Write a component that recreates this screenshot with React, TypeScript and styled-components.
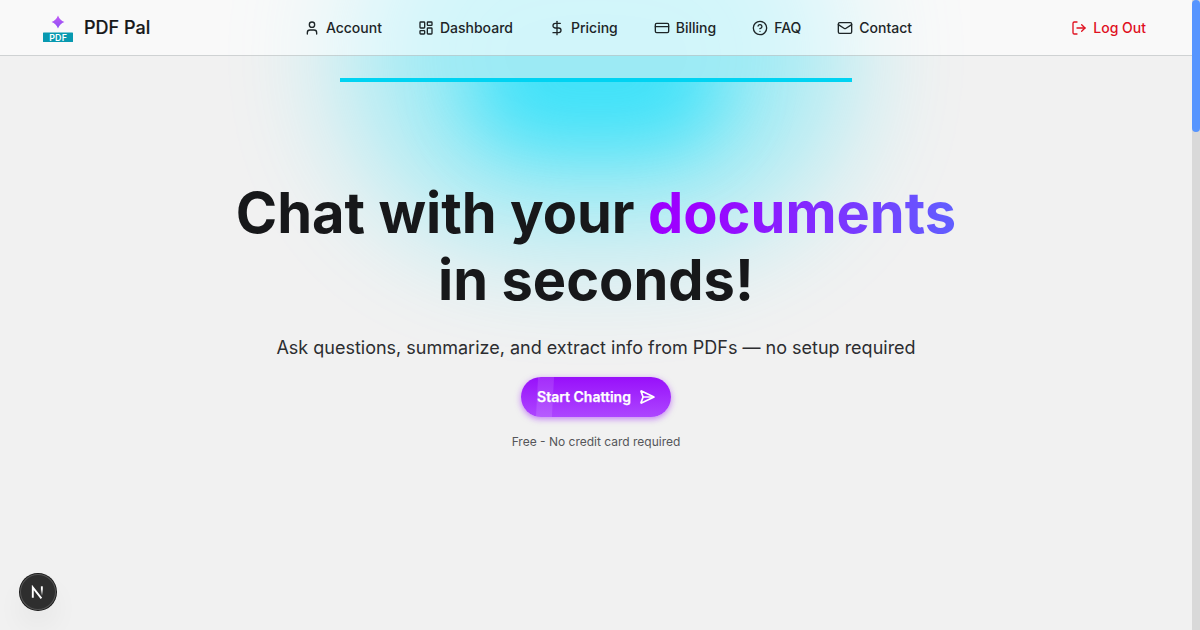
import React from "react";
import styled, { createGlobalStyle } from "styled-components";
import { User, LayoutDashboard, DollarSign, CreditCard, CircleHelp, Mail, LogOut, SendHorizontal } from "lucide-react";

const GlobalStyle = createGlobalStyle`
  * { box-sizing: border-box; }
  body { margin: 0; background: #f1f1f1; font-family: Inter, "Liberation Sans", sans-serif; overflow: hidden; }
`;

const Window = styled.div`
  display: grid;
  grid-template-columns: 1fr 8px;
  height: 630px;
  color: #17181a;
`;

const Page = styled.div`
  position: relative;
  isolation: isolate;
  overflow: hidden;
  display: flex;
  flex-direction: column;
`;

const Track = styled.div`
  background: #d9d9d9;
`;

const Thumb = styled.div`
  height: 132px;
  border-radius: 4px;
  background: #5695ff;
`;

const Lamp = styled.div`
  position: absolute;
  inset: 0;
  z-index: -1;
  overflow: hidden;
`;

const WideGlow = styled.div`
  position: absolute;
  left: 50%;
  top: -130px;
  width: 496px;
  height: 370px;
  margin-left: -248px;
  border-radius: 180px;
  background: #00dffc;
  opacity: 0.35;
  filter: blur(60px);
`;

const Beam = styled.div`
  position: absolute;
  inset: 80px 0 0;
  overflow: hidden;
`;

const InnerGlow = styled.div`
  position: absolute;
  left: 50%;
  top: -72px;
  width: 252px;
  height: 144px;
  margin-left: -126px;
  border-radius: 72px;
  background: #00dcfc;
  opacity: 0.58;
  filter: blur(36px);
`;

const Bar = styled.div`
  position: absolute;
  top: 78px;
  left: 50%;
  width: 512px;
  height: 4px;
  margin-left: -256px;
  background: #00d3f2;
`;

const Header = styled.header`
  display: flex;
  align-items: center;
  justify-content: space-between;
  height: 56px;
  padding: 0 46px 0 42px;
  border-bottom: 1px solid rgba(100, 110, 115, 0.28);
  background: rgba(255, 255, 255, 0.54);
`;

const Brand = styled.div`
  display: flex;
  align-items: center;
  gap: 10px;
  width: 188px;
  font-size: 18px;
  font-weight: 500;
  -webkit-text-stroke: 0.2px currentColor;
`;

const Nav = styled.nav`
  display: flex;
  gap: 36px;
`;

const NavItem = styled.a<{ $danger?: boolean }>`
  display: flex;
  align-items: center;
  gap: 6px;
  font-size: 14px;
  font-weight: 500;
  line-height: 20px;
  color: ${(p) => (p.$danger ? "#e0101f" : "#1d2527")};
`;

const Session = styled.div`
  display: flex;
  justify-content: flex-end;
  width: 160px;
`;

const Hero = styled.main`
  display: flex;
  flex-direction: column;
  align-items: center;
  padding-top: 124px;
  text-align: center;
`;

const Title = styled.h1`
  margin: 0;
  font-size: 56px;
  line-height: 67px;
  font-weight: 700;
`;

const Accent = styled.span`
  background: linear-gradient(90deg, #9d00ff 15%, #615fff 100%);
  background-clip: text;
  -webkit-background-clip: text;
  color: transparent;
`;

const Subtitle = styled.p`
  margin: 20px 0 15px;
  font-size: 18px;
  line-height: 28px;
  color: #2c2d30;
`;

const Cta = styled.button`
  position: relative;
  overflow: hidden;
  display: flex;
  align-items: center;
  gap: 8px;
  height: 40px;
  padding: 0 16px;
  border: 0;
  border-radius: 20px;
  background: linear-gradient(#9810fa, #ad46ff);
  color: #fff;
  font: 600 14px/20px Inter, sans-serif;
  -webkit-text-stroke: 0.25px #fff;
`;

const CtaShadow = styled.div`
  border-radius: 20px;
  box-shadow: 0 2px 6px rgba(152, 16, 250, 0.5);
`;

const Shine = styled.span`
  position: absolute;
  top: 0;
  left: 16px;
  width: 16px;
  height: 40px;
  background: rgba(255, 255, 255, 0.12);
  transform: skewX(-3deg);
`;

const Note = styled.p`
  margin: 17px 0 0;
  font-size: 12px;
  line-height: 16px;
  color: #55565a;
`;

const DevBadge = styled.div`
  position: absolute;
  left: 20px;
  bottom: 20px;
  display: flex;
  align-items: center;
  justify-content: center;
  width: 36px;
  height: 36px;
  border-radius: 50%;
  background: #2e2e2e;
  box-shadow: 0 0 0 1px #171717, inset 0 0 0 1px #545454, 0 16px 32px -8px rgba(0, 0, 0, 0.16);
`;

const links = [
  { label: "Account", Icon: User },
  { label: "Dashboard", Icon: LayoutDashboard },
  { label: "Pricing", Icon: DollarSign },
  { label: "Billing", Icon: CreditCard },
  { label: "FAQ", Icon: CircleHelp },
  { label: "Contact", Icon: Mail },
];

function Logo() {
  return (
    <svg width="32" height="28" viewBox="0 0 32 28">
      <defs>
        <linearGradient id="spark" x1="0" y1="0" x2="0" y2="1">
          <stop offset="0" stopColor="#c45cf5" />
          <stop offset="1" stopColor="#8a4df5" />
        </linearGradient>
      </defs>
      <path d="M16 1.5Q17.8 6.3 22.4 8Q17.8 9.7 16 14.5Q14.2 9.7 9.6 8Q14.2 6.3 16 1.5Z" fill="url(#spark)" />
      <rect x="1" y="18.5" width="30" height="9.5" rx="0.6" fill="#0899b0" />
      <text x="16.2" y="26.5" textAnchor="middle" fontFamily="Inter, sans-serif" fontSize="8.8" fontWeight="600" letterSpacing="0.3" fill="#fff">PDF</text>
    </svg>
  );
}

function NextMark() {
  return (
    <svg width="14" height="14" viewBox="0 0 14 14" fill="none">
      <defs>
        <linearGradient id="stem" x1="0" y1="0" x2="0" y2="1">
          <stop offset="0.3" stopColor="#fff" />
          <stop offset="1" stopColor="#fff" stopOpacity="0" />
        </linearGradient>
      </defs>
      <path d="M1.8 12.7V2.4L10.4 13.4" stroke="#fff" strokeWidth="1.9" />
      <rect x="9.9" y="1.3" width="1.9" height="9.5" fill="url(#stem)" />
    </svg>
  );
}

export default function App() {
  return (
    <>
      <GlobalStyle />
      <Window>
        <Page>
          <Lamp>
            <WideGlow />
            <Beam><InnerGlow /></Beam>
            <Bar />
          </Lamp>
          <Header>
            <Brand><Logo />PDF Pal</Brand>
            <Nav>
              {links.map(({ label, Icon }) => (
                <NavItem key={label}><Icon size={16} />{label}</NavItem>
              ))}
            </Nav>
            <Session><NavItem $danger><LogOut size={16} />Log Out</NavItem></Session>
          </Header>
          <Hero>
            <Title>Chat with your <Accent>documents</Accent><br />in seconds!</Title>
            <Subtitle>Ask questions, summarize, and extract info from PDFs — no setup required</Subtitle>
            <CtaShadow>
              <Cta>Start Chatting<SendHorizontal size={16} strokeWidth={2.6} /><Shine /></Cta>
            </CtaShadow>
            <Note>Free - No credit card required</Note>
          </Hero>
          <DevBadge><NextMark /></DevBadge>
        </Page>
        <Track><Thumb /></Track>
      </Window>
    </>
  );
}
